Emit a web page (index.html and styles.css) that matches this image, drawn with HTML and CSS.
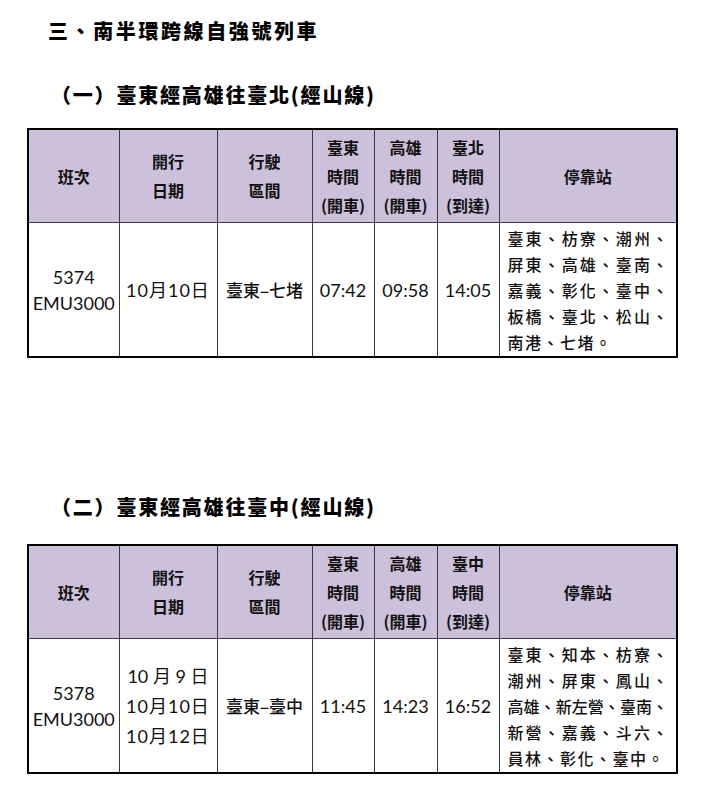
FILE: index.html
```html
<!DOCTYPE html>
<html lang="zh-Hant">
<head>
<meta charset="utf-8">
<link rel="stylesheet" href="styles.css">
</head>
<body>
<div class="page">
  <h1 class="title">三、南半環跨線自強號列車</h1>

  <h2 class="subtitle">（一）臺東經高雄往臺北(經山線)</h2>
  <table class="sched">
    <colgroup>
      <col class="c1"><col class="c2"><col class="c3"><col class="c4"><col class="c5"><col class="c6"><col class="c7">
    </colgroup>
    <thead>
      <tr>
        <th>班次</th>
        <th>開行<br>日期</th>
        <th>行駛<br>區間</th>
        <th class="tight">臺東<br>時間<br>(開車)</th>
        <th class="tight">高雄<br>時間<br>(開車)</th>
        <th class="tight">臺北<br>時間<br>(到達)</th>
        <th>停靠站</th>
      </tr>
    </thead>
    <tbody>
      <tr>
        <td class="num">5374<br>EMU3000</td>
        <td class="num dates">10月10日</td>
        <td class="route">臺東–七堵</td>
        <td class="num">07:42</td>
        <td class="num">09:58</td>
        <td class="num">14:05</td>
        <td class="stops">
          <div class="j">臺東、枋寮、潮州、</div>
          <div class="j">屏東、高雄、臺南、</div>
          <div class="j">嘉義、彰化、臺中、</div>
          <div class="j">板橋、臺北、松山、</div>
          <div class="last">南港、七堵。</div>
        </td>
      </tr>
    </tbody>
  </table>

  <h2 class="subtitle second">（二）臺東經高雄往臺中(經山線)</h2>
  <table class="sched">
    <colgroup>
      <col class="c1"><col class="c2"><col class="c3"><col class="c4"><col class="c5"><col class="c6"><col class="c7">
    </colgroup>
    <thead>
      <tr>
        <th>班次</th>
        <th>開行<br>日期</th>
        <th>行駛<br>區間</th>
        <th class="tight">臺東<br>時間<br>(開車)</th>
        <th class="tight">高雄<br>時間<br>(開車)</th>
        <th class="tight">臺中<br>時間<br>(到達)</th>
        <th>停靠站</th>
      </tr>
    </thead>
    <tbody>
      <tr>
        <td class="num">5378<br>EMU3000</td>
        <td class="num dates multi"><span class="spaced">10 月 9 日</span><br>10月10日<br>10月12日</td>
        <td class="route">臺東–臺中</td>
        <td class="num">11:45</td>
        <td class="num">14:23</td>
        <td class="num">16:52</td>
        <td class="stops">
          <div class="j">臺東、知本、枋寮、</div>
          <div class="j">潮州、屏東、鳳山、</div>
          <div class="j">高雄、新左營、臺南、</div>
          <div class="j">新營、嘉義、斗六、</div>
          <div class="last">員林、彰化、臺中。</div>
        </td>
      </tr>
    </tbody>
  </table>
</div>
</body>
</html>
```

FILE: styles.css
```css
html, body {
  margin: 0;
  padding: 0;
  background: #ffffff;
}

.page {
  padding: 18px 0 0 27px;
  color: #000;
  font-family: "Noto Sans CJK TC", "Noto Sans CJK SC", sans-serif;
}

.title {
  margin: 0 0 0 21px;
  font-size: 20px;
  line-height: 26px;
  font-weight: 900;
  letter-spacing: 2.6px;
}

.subtitle {
  margin: 38px 0 20px 24px;
  font-size: 20px;
  line-height: 26px;
  font-weight: 900;
  letter-spacing: 1.8px;
}

.subtitle.second {
  margin-top: 136px;
  margin-bottom: 24px;
}

.sched {
  width: 649px;
  table-layout: fixed;
  border-collapse: collapse;
  border: 2px solid #000;
  font-size: 16px;
}

.c1 { width: 91px; }
.c2 { width: 98px; }
.c3 { width: 95px; }
.c4 { width: 62px; }
.c5 { width: 63px; }
.c6 { width: 62px; }
.c7 { width: 178px; }

.sched th,
.sched td {
  border: 1px solid #3a3a3a;
  padding: 0;
  text-align: center;
  vertical-align: middle;
}

.sched th {
  background: #ccc0da;
  height: 92px;
  font-weight: 700;
  line-height: 29px;
  color: #111;
}

.sched td {
  height: 133px;
  font-weight: 500;
  line-height: 26px;
  color: #111;
}

.sched .num {
  font-family: "Lato", "Noto Sans CJK TC", sans-serif;
  font-size: 18px;
  font-weight: 400;
}

.sched .dates {
  letter-spacing: 1px;
}

.sched .dates.multi {
  line-height: 30px;
}

.dates .spaced {
  letter-spacing: 0;
}

.sched .route {
  font-size: 17px;
}

.sched .stops {
  text-align: left;
  padding: 0 8px 0 8px;
  white-space: nowrap;
}

.stops .j {
  text-align: justify;
  text-align-last: justify;
}

.stops .last {
  letter-spacing: 1.5px;
}
```
